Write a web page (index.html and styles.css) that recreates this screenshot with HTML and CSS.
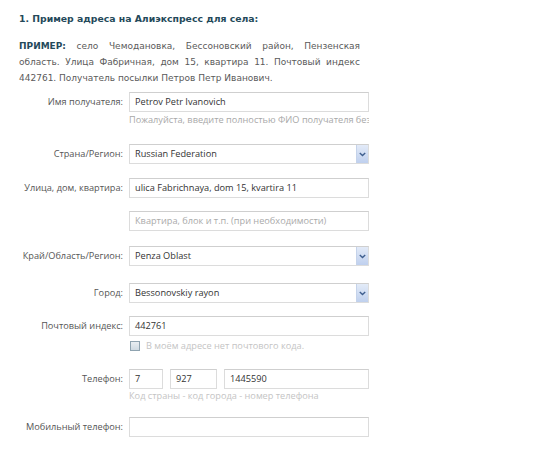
FILE: index.html
```html
<!DOCTYPE html>
<html lang="ru">
<head>
<meta charset="utf-8">
<title>Пример адреса</title>
<link rel="stylesheet" href="styles.css">
</head>
<body>
<div class="page">
  <h2 class="title">1. Пример адреса на Алиэкспресс для села:</h2>
  <p class="example"><b>ПРИМЕР:</b> село Чемодановка, Бессоновский район, Пензенская область. Улица Фабричная, дом 15, квартира 11. Почтовый индекс 442761. Получатель посылки Петров Петр Иванович.</p>

  <div class="form">
    <div class="row r-name">
      <label class="lbl">Имя получателя:</label>
      <div class="field">
        <div class="input">Petrov Petr Ivanovich</div>
        <div class="hint hint-dark">Пожалуйста, введите полностью ФИО получателя без</div>
      </div>
    </div>

    <div class="row r-country">
      <label class="lbl">Страна/Регион:</label>
      <div class="field">
        <div class="input select">Russian Federation<span class="arrow"><svg width="7" height="5" viewBox="0 0 7 5"><path d="M0.8 1 L3.5 3.6 L6.2 1" fill="none" stroke="#3f5f8f" stroke-width="1.4"/></svg></span></div>
      </div>
    </div>

    <div class="row r-street">
      <label class="lbl">Улица, дом, квартира:</label>
      <div class="field">
        <div class="input">ulica Fabrichnaya, dom 15, kvartira 11</div>
      </div>
    </div>

    <div class="row r-apt">
      <span class="lbl"></span>
      <div class="field">
        <div class="input placeholder">Квартира, блок и т.п. (при необходимости)</div>
      </div>
    </div>

    <div class="row r-region">
      <label class="lbl">Край/Область/Регион:</label>
      <div class="field">
        <div class="input select">Penza Oblast<span class="arrow"><svg width="7" height="5" viewBox="0 0 7 5"><path d="M0.8 1 L3.5 3.6 L6.2 1" fill="none" stroke="#3f5f8f" stroke-width="1.4"/></svg></span></div>
      </div>
    </div>

    <div class="row r-city">
      <label class="lbl">Город:</label>
      <div class="field">
        <div class="input select">Bessonovskiy rayon<span class="arrow"><svg width="7" height="5" viewBox="0 0 7 5"><path d="M0.8 1 L3.5 3.6 L6.2 1" fill="none" stroke="#3f5f8f" stroke-width="1.4"/></svg></span></div>
      </div>
    </div>

    <div class="row r-zip">
      <label class="lbl">Почтовый индекс:</label>
      <div class="field">
        <div class="input">442761</div>
        <div class="check"><span class="box"></span><span class="hint">В моём адресе нет почтового кода.</span></div>
      </div>
    </div>

    <div class="row r-phone">
      <label class="lbl">Телефон:</label>
      <div class="field">
        <div class="phones">
          <div class="input p1">7</div>
          <div class="input p2">927</div>
          <div class="input p3">1445590</div>
        </div>
        <div class="hint">Код страны - код города - номер телефона</div>
      </div>
    </div>

    <div class="row r-mobile">
      <label class="lbl">Мобильный телефон:</label>
      <div class="field">
        <div class="input"></div>
      </div>
    </div>
  </div>
</div>
</body>
</html>
```

FILE: styles.css
```css
html, body {
  margin: 0;
  padding: 0;
  background: #ffffff;
}
.page {
  width: 550px;
  padding: 12px 0 0 19px;
  box-sizing: border-box;
}
.title {
  margin: 0;
  font-family: "DejaVu Sans", Verdana, sans-serif;
  font-weight: bold;
  font-size: 9.3px;
  line-height: 14px;
  color: #24495a;
}
.example {
  margin: 12px 0 0 0;
  width: 341px;
  font-family: "DejaVu Sans", Verdana, sans-serif;
  font-size: 9px;
  line-height: 16px;
  color: #5a5a5a;
  text-align: justify;
}
.example b {
  color: #24495a;
}
.form {
  margin-top: 6px;
  font-family: "Open Sans", sans-serif;
  font-size: 9.2px;
}
.row {
  display: grid;
  grid-template-columns: 104px 240px;
  column-gap: 6px;
  align-items: start;
}
.lbl {
  text-align: right;
  color: #555;
  line-height: 20px;
  white-space: nowrap;
}
.field {
  display: flex;
  flex-direction: column;
  width: 240px;
}
.input {
  height: 20px;
  box-sizing: border-box;
  border: 1px solid #dcdcdc;
  border-top-color: #cfcfcf;
  background: #fff;
  color: #333;
  line-height: 18px;
  padding: 0 5px;
  white-space: nowrap;
  overflow: hidden;
  position: relative;
}
.placeholder {
  color: #aaa;
}
.select .arrow {
  position: absolute;
  right: 0;
  top: 0;
  width: 12px;
  height: 18px;
  box-sizing: border-box;
  border-left: 1px solid #c5d3ea;
  background: linear-gradient(#e3ebf8, #bfd0ee);
  display: flex;
  align-items: center;
  justify-content: center;
}
.hint {
  color: #c4c4c4;
  line-height: 14px;
  white-space: nowrap;
  overflow: hidden;
}
.hint-dark {
  color: #a8a8a8;
  margin-top: 1px;
}
.check {
  display: flex;
  align-items: center;
  margin-top: 3px;
  gap: 6px;
}
.box {
  width: 10px;
  height: 10px;
  box-sizing: border-box;
  border: 1px solid #8fa3b0;
  background: linear-gradient(#e9eef2, #cfdae2);
  margin-left: 1px;
}
.phones {
  display: flex;
  gap: 7px;
}
.p1 { width: 34px; }
.p2 { width: 47px; }
.p3 { flex: 1; }
.r-name { margin-bottom: 17px; }
.r-country { margin-bottom: 14px; }
.r-street { margin-bottom: 13px; }
.r-apt { margin-bottom: 15px; }
.r-region { margin-bottom: 17px; }
.r-city { margin-bottom: 13px; }
.r-zip { margin-bottom: 16px; }
.r-phone { margin-bottom: 14px; }
```
